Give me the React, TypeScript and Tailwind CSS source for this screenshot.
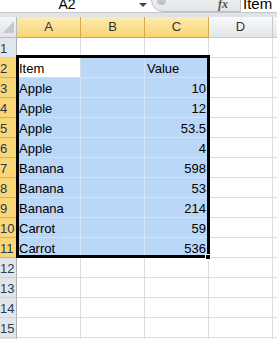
import React from 'react';

type Cell = { text: string; align?: 'left' | 'right' };

const COLS = ['A', 'B', 'C', 'D'];
const SELECTED_COLS = ['A', 'B', 'C'];

// row number -> [A, B, C, D]
const ROWS: { n: number; cells: Cell[] }[] = [
  { n: 1, cells: [{ text: '' }, { text: '' }, { text: '' }, { text: '' }] },
  { n: 2, cells: [{ text: 'Item' }, { text: '' }, { text: 'Value' }, { text: '' }] },
  ...[
    ['Apple', '10'],
    ['Apple', '12'],
    ['Apple', '53.5'],
    ['Apple', '4'],
    ['Banana', '598'],
    ['Banana', '53'],
    ['Banana', '214'],
    ['Carrot', '59'],
    ['Carrot', '536'],
  ].map(([item, value], i) => ({
    n: i + 3,
    cells: [
      { text: item },
      { text: '' },
      { text: value, align: 'right' as const },
      { text: '' },
    ],
  })),
  ...[12, 13, 14, 15, 16].map((n) => ({
    n,
    cells: [{ text: '' }, { text: '' }, { text: '' }, { text: '' }],
  })),
];

const isSelected = (row: number, col: number) => row >= 2 && row <= 11 && col <= 2;

function FormulaBar() {
  return (
    <div className="flex h-[13px] overflow-hidden border-b border-[#c3c8cf] bg-white">
      {/* name box */}
      <div className="flex w-[134px] justify-center">
        <span className="mt-[-3px] text-[14px] leading-[14px] text-black">A2</span>
      </div>
      {/* dropdown arrow */}
      <div className="flex w-[17px] justify-center pt-[3px]">
        <svg width="8" height="4" viewBox="0 0 8 4">
          <path d="M0 0h8L4 4z" fill="#444" />
        </svg>
      </div>
      {/* splitter + fx */}
      <div className="relative flex w-[82px] items-end justify-end">
        <div className="absolute left-0 top-[-12px] h-[24px] w-[90px] rounded-l-[12px] border border-[#b9bec5] bg-linear-to-b from-[#f6f7f8] to-[#e2e4e7]" />
        <div className="absolute left-[6px] top-[-4px] h-[9px] w-[9px] rounded-full bg-linear-to-b from-[#d4d6d9] to-[#b9bcc0]" />
        <span className="relative mb-[2px] mr-[5px] font-['Liberation_Serif',serif] text-[12px] italic font-bold leading-[12px] text-[#555]">
          fx
        </span>
      </div>
      {/* formula box */}
      <div className="flex flex-1 border-l border-[#b9bec5] bg-white pl-[9px]">
        <span className="mt-[-4px] text-[15px] leading-[15px] text-black">Item</span>
      </div>
    </div>
  );
}

function HeaderRow() {
  return (
    <div className="grid h-[21px] grid-cols-[17px_64px_64px_64px_64px_1fr]">
      <div className="relative border-b border-r border-[#b6bcc5] bg-linear-to-b from-[#f4f5f7] to-[#e1e4e8]">
        <svg className="absolute left-[3px] top-[4px]" width="11" height="12" viewBox="0 0 11 12">
          <path d="M11 0V12H0z" fill="#c5c9cf" />
        </svg>
      </div>
      {COLS.map((c) => {
        const sel = SELECTED_COLS.includes(c);
        return (
          <div
            key={c}
            className={
              sel
                ? 'flex items-center justify-center border-b border-r border-[#dca64a] bg-linear-to-b from-[#fdebb1] to-[#f9d46e] text-[13px] text-[#333]'
                : 'flex items-center justify-center border-b border-r border-[#c5cad1] bg-linear-to-b from-[#f8f9fa] to-[#e3e6ea] text-[13px] text-[#333]'
            }
          >
            {c}
          </div>
        );
      })}
      <div className="border-b border-[#c5cad1] bg-linear-to-b from-[#f8f9fa] to-[#e3e6ea]" />
    </div>
  );
}

function SheetRow({ n, cells }: { n: number; cells: Cell[] }) {
  const selRow = n >= 2 && n <= 11;
  return (
    <div className="grid h-[20px] grid-cols-[17px_64px_64px_64px_64px_1fr]">
      <div
        className={
          selRow
            ? 'flex items-end border-b border-r border-b-[#e2ae4d] border-r-[#d99a33] bg-[#fbd677] text-[13px] leading-[16px] text-[#243650]'
            : 'flex items-end border-b border-r border-b-[#cfd3d9] border-r-[#a7afb9] bg-[#e2e6eb] text-[13px] leading-[16px] text-[#2a3b55]'
        }
      >
        {n}
      </div>
      {cells.map((cell, ci) => {
        const sel = isSelected(n, ci);
        const active = n === 2 && ci === 0;
        const bg = active ? 'bg-white border-[#d9dde2]' : sel ? 'bg-[#bad7f8] border-[#d4e4f6]' : 'bg-white border-[#dadcdf]';
        return (
          <div
            key={ci}
            className={`flex items-end overflow-hidden whitespace-nowrap border-b border-r px-[2px] text-[13px] leading-[16px] text-black ${bg} ${
              cell.align === 'right' ? 'justify-end' : 'justify-start'
            }`}
          >
            {cell.text}
          </div>
        );
      })}
      <div className="border-b border-[#dadcdf] bg-white" />
    </div>
  );
}

export default function App() {
  return (
    <div className="relative h-[339px] w-[277px] overflow-hidden bg-white font-['Liberation_Sans',Arial,sans-serif]">
      <FormulaBar />
      <div className="h-[4px] bg-[#dfe3e8]" />
      <HeaderRow />
      {ROWS.map((r) => (
        <SheetRow key={r.n} n={r.n} cells={r.cells} />
      ))}

      {/* selection outline A2:C11 */}
      <div className="pointer-events-none absolute left-[16px] top-[55px] h-[203px] w-[194px] border-[3px] border-black" />
      {/* fill handle */}
      <div className="pointer-events-none absolute left-[205px] top-[254px] h-[6px] w-[6px] border border-white bg-black" />
    </div>
  );
}
